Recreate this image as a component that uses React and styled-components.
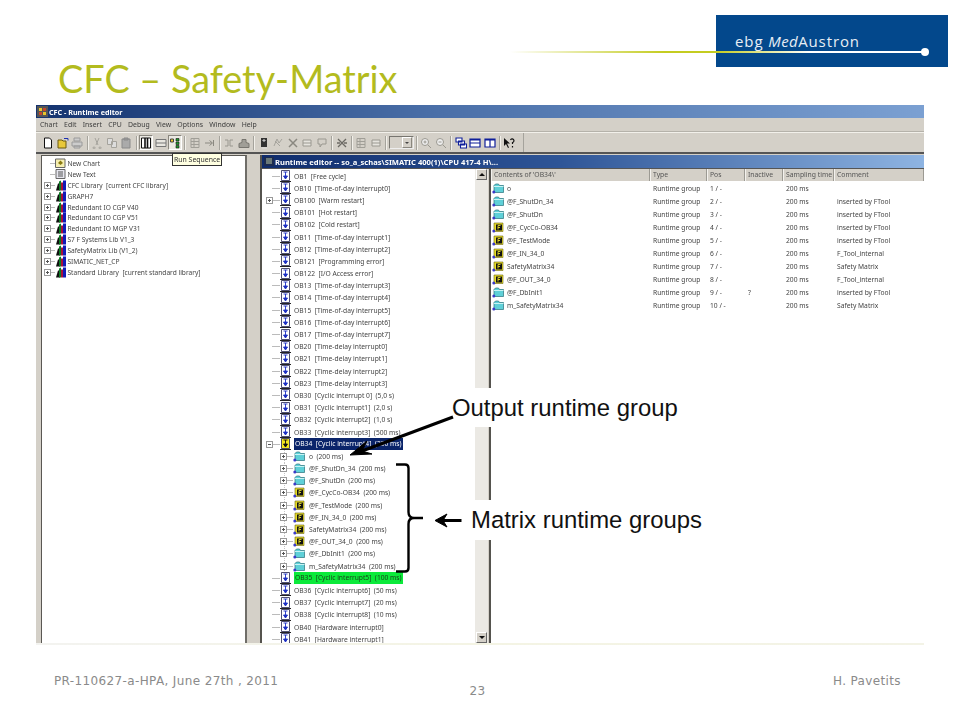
import React from 'react';
import styled, { createGlobalStyle } from 'styled-components';

const GlobalStyle = createGlobalStyle`
  html, body {
    margin: 0;
    padding: 0;
    background: #fff;
  }
`;

const Slide = styled.div`
  position: relative;
  width: 960px;
  height: 720px;
  overflow: hidden;
  background: #fff;
  display: flex;
  flex-direction: column;
`;

const Header = styled.header`
  height: 105px;
  display: flex;
  align-items: flex-start;
  padding-left: 58px;
  padding-right: 12px;
  box-sizing: border-box;
`;

const Title = styled.h1`
  margin: 58px 0 0;
  font: 400 37.8px/42px Lato, "Open Sans", sans-serif;
  color: #b3bb1e;
  white-space: nowrap;
`;

const Brand = styled.div`
  margin: 15px 0 0 auto;
  display: flex;
  align-items: flex-start;
`;

const FadeLine = styled.div`
  width: 206px;
  height: 2px;
  margin-top: 36px;
  background: linear-gradient(90deg, rgba(196, 204, 32, 0), #c4cc20 75%);
`;

const BrandBox = styled.div`
  position: relative;
  width: 232px;
  height: 52px;
  box-sizing: border-box;
  padding: 17px 0 0 19px;
  background: #03488c;
  color: #e8eef5;
  font: 400 15px/18px "Open Sans", sans-serif;
  letter-spacing: 0.9px;

  em {
    font-style: italic;
    letter-spacing: 0.4px;
  }

  &::before {
    content: '';
    position: absolute;
    left: 0;
    top: 36px;
    width: 208px;
    height: 2px;
    background: linear-gradient(90deg, #c4cc20, #fff 45%);
  }

  &::after {
    content: '';
    position: absolute;
    left: 205px;
    top: 33px;
    width: 8px;
    height: 8px;
    border-radius: 50%;
    background: #fff;
  }
`;

const Win = styled.div`
  width: 888px;
  height: 538px;
  margin-left: 36px;
  display: flex;
  flex-direction: column;
  background: #d4d0c8;
  font-family: "Noto Sans", "Open Sans", sans-serif;
  color: #3c3c3c;
  filter: blur(0.4px);
  overflow: hidden;
`;

const TitleBar = styled.div`
  height: 13px;
  flex: none;
  display: flex;
  align-items: center;
  gap: 1px;
  padding-left: 1px;
  background: linear-gradient(90deg, #14336f, #4a6fa8 45%, #7ba0d2);
  color: #fff;
  font-size: 7.2px;
  font-weight: 700;
  white-space: pre;
`;

const MenuBar = styled.div`
  height: 13px;
  flex: none;
  display: flex;
  align-items: center;
  gap: 6.3px;
  padding-left: 4px;
  font-size: 6.9px;
  border-bottom: 1px solid #b5b2aa;
`;

const Toolbar = styled.div`
  height: 20px;
  flex: none;
  display: flex;
  align-items: center;
  padding-left: 5px;
  border-top: 1px solid #f2f0ea;
  box-sizing: border-box;
`;

const ToolStrip = styled.div`
  width: 482px;
  height: 100%;
  display: flex;
  align-items: center;
  border-right: 1px solid #a5a39c;
`;

const ToolButton = styled.div`
  width: 14.5px;
  height: 15px;
  flex: none;
  display: flex;
  align-items: center;
  justify-content: center;
  box-sizing: border-box;
  border: 1px solid ${p => (p.$pressed ? '#8a877f' : 'transparent')};
  border-right-color: ${p => (p.$pressed ? '#fff' : 'transparent')};
  border-bottom-color: ${p => (p.$pressed ? '#fff' : 'transparent')};
  background: ${p => (p.$pressed ? '#ebe9e3' : 'transparent')};
`;

const ToolSep = styled.div`
  width: 1px;
  height: 14px;
  flex: none;
  margin: 0 2.2px;
  background: #a5a39c;
  box-shadow: 1px 0 0 #f2f0ea;
`;

const Combo = styled.div`
  width: 25px;
  height: 13px;
  flex: none;
  box-sizing: border-box;
  display: flex;
  justify-content: flex-end;
  align-items: center;
  border: 1px solid #77756f;
  border-right-color: #eee;
  border-bottom-color: #eee;
  background: #d4d0c8;
  padding-right: 1px;
`;

const SmallArrow = styled.div`
  width: 8px;
  height: 9px;
  display: flex;
  align-items: center;
  justify-content: center;
  border: 1px solid #8a877f;
  border-left-color: #fff;
  border-top-color: #fff;

  &::after {
    content: '';
    border: 2px solid transparent;
    border-top: 2px solid #444;
    border-bottom: 0;
  }
`;

const Tooltip = styled.div`
  position: absolute;
  left: 172px;
  top: 153px;
  height: 11px;
  padding: 0 1px;
  display: flex;
  align-items: center;
  background: #ffffe1;
  border: 1px solid #333;
  font: 400 6.9px "Noto Sans", sans-serif;
  color: #333;
  filter: blur(0.3px);
  white-space: nowrap;
`;

const Workspace = styled.div`
  flex: 1;
  min-height: 0;
  display: flex;
  border-top: 2px solid #555;
  padding: 1px 0 0 5px;
`;

const LibraryPane = styled.div`
  width: 206px;
  flex: none;
  box-sizing: border-box;
  margin-bottom: -4px;
  padding-top: 2px;
  background: #fff;
  border: 1px solid #5a5853;
  border-right: 2px solid #6f6d68;
`;

const LibraryRow = styled.div`
  height: 10.9px;
  display: flex;
  align-items: center;
  font-size: 6.6px;
  white-space: pre;
`;

const Twig = styled.div`
  width: ${p => p.$w}px;
  height: 100%;
  flex: none;
  display: flex;
  align-items: center;
  box-sizing: border-box;
  padding-left: ${p => p.$pad}px;
  background:
    linear-gradient(#bbb, #bbb) no-repeat right center / ${p => p.$line}px 1px,
    ${p => (p.$guide ? 'repeating-linear-gradient(#c4c4c4 0 1px, transparent 1px 2px) no-repeat 21.5px 0 / 1px 100%' : 'none')};
`;

const Expander = styled.div`
  width: 7px;
  height: 7px;
  flex: none;
  box-sizing: border-box;
  border: 1px solid #999;
  background: linear-gradient(#555, #555) center / 3px 1px no-repeat, ${p => (p.$open ? 'none' : 'linear-gradient(#555, #555) center / 1px 3px no-repeat')}, #fff;
`;

const MdiWindow = styled.div`
  flex: 1;
  min-width: 0;
  margin-left: 13px;
  display: flex;
  flex-direction: column;
  border-left: 2px solid #55534e;
`;

const MdiTitle = styled(TitleBar)`
  height: 13px;
  padding-left: 2px;
  font-size: 7.6px;
  background: linear-gradient(90deg, #0f2c6c, #2e5597 45%, #8eb4e2);
`;

const MdiBody = styled.div`
  flex: 1;
  min-height: 0;
  display: flex;
  border-top: 1px solid #555;
`;

const TreePane = styled.div`
  width: 213px;
  flex: none;
  overflow: hidden;
  background: #fff;
  padding-top: 1px;
  margin-bottom: -4px;
`;

const TreeRow = styled.div`
  height: 12.2px;
  display: flex;
  align-items: center;
  font-size: 6.7px;
  white-space: pre;
`;

const RowLabel = styled.span`
  margin-left: ${p => p.$gap}px;
  color: #444;
`;

const HighlightLabel = styled.span`
  width: 109px;
  box-sizing: border-box;
  height: 12px;
  margin-left: 3px;
  padding-left: 1px;
  line-height: 12px;
  background: ${p => (p.$green ? '#0bea3a' : '#0a246a')};
  color: ${p => (p.$green ? '#1b3b1b' : '#fff')};
`;

const ScrollBar = styled.div`
  width: 13px;
  flex: none;
  display: flex;
  flex-direction: column;
  justify-content: space-between;
  background: #ebe9e4;
  padding: 0 1px;
  box-sizing: border-box;
`;

const ScrollButton = styled.div`
  height: 11px;
  display: flex;
  align-items: center;
  justify-content: center;
  background: #d4d0c8;
  border: 1px solid #fff;
  border-right-color: #666;
  border-bottom-color: #666;
  box-sizing: border-box;

  &::after {
    content: '';
    border: 3px solid transparent;
    ${p => (p.$down ? 'border-top: 3px solid #111; border-bottom: 0;' : 'border-bottom: 3px solid #111; border-top: 0;')}
  }
`;

const ListPane = styled.div`
  flex: 1;
  min-width: 0;
  margin-left: 1px;
  background: #fff;
  border-left: 2px solid #55534e;
`;

const columns = '159px 57px 38px 38px 51px 1fr';

const ListHeader = styled.div`
  height: 12px;
  display: grid;
  grid-template-columns: ${columns};
  background: #d4d0c8;
  font-size: 6.8px;
  color: #555;
`;

const HeaderCell = styled.div`
  padding-left: 3px;
  line-height: 12px;
  white-space: nowrap;
  overflow: hidden;
  border-right: 1px solid #9c9a93;
  box-shadow: inset 1px 0 0 #f4f2ee;
`;

const ListBody = styled.div`
  padding-top: 1px;
`;

const ListRow = styled.div`
  height: 13px;
  display: grid;
  grid-template-columns: ${columns};
  align-items: center;
  font-size: 6.7px;
  color: #444;
  white-space: nowrap;
`;

const NameCell = styled.div`
  display: flex;
  align-items: center;
  gap: 3px;
  padding-left: 1px;
`;

const Cell = styled.div`
  padding-left: 3px;
`;

const Callout = styled.div`
  position: absolute;
  left: ${p => p.$x}px;
  top: ${p => p.$y}px;
  width: ${p => p.$w}px;
  height: ${p => p.$h}px;
  padding-left: ${p => p.$pad}px;
  display: flex;
  align-items: center;
  box-sizing: border-box;
  background: #fff;
  color: #111;
  font: 400 23.9px "Liberation Sans", Arial, sans-serif;
  white-space: nowrap;
`;

const Overlay = styled.svg`
  position: absolute;
  left: 0;
  top: 0;
  pointer-events: none;
`;

const BottomRule = styled.div`
  height: 2px;
  margin: 0 36px;
  background: linear-gradient(90deg, #f3f3f0, #f4f4e4 50%, #f3f3e6);
`;

const Footer = styled.footer`
  display: flex;
  flex-direction: column;
  padding: 30px 59px 0 54px;
  color: #8a8a8a;
  font: 400 12px/12px "DejaVu Sans", Verdana, sans-serif;
  letter-spacing: 0.37px;
`;

const FooterRow = styled.div`
  display: flex;
  justify-content: space-between;
`;

const PageNumber = styled.div`
  text-align: center;
  margin-top: -2px;
`;

const ObIcon = ({ active }) => (
  <svg width="11" height="12" viewBox="0 0 11 12">
    <path d="M1.500 .5h8v10h-8z" fill={active ? '#f4e81e' : '#fff'} stroke="#23234f" strokeWidth=".8" />
    <path d="M3.500 2h4M5.500 2v6M3.500 6l2 3 2-3z" stroke={active ? '#111' : '#1c2fc4'} fill={active ? '#111' : '#1c2fc4'} strokeWidth=".9" />
    <path d="M0 11.500h11" stroke="#222" strokeWidth="1" />
  </svg>
);

const FolderIcon = () => (
  <svg width="12" height="11" viewBox="0 0 12 11">
    <path d="M2 2.500l1.500-1.500h3l1 1.500h4v7h-9.500z" fill="#5fd0d8" stroke="#26707a" strokeWidth=".7" />
    <path d="M2 3.500h9.500" stroke="#c8f4f4" strokeWidth="1" />
    <circle cx="1.800" cy="9" r="1.500" fill="#3a3ac8" />
  </svg>
);

const SafetyIcon = () => (
  <svg width="12" height="11" viewBox="0 0 12 11">
    <path d="M2 1h9v8.500h-9z" fill="#e6dc2a" stroke="#6b6410" strokeWidth=".6" />
    <path d="M4 2.500h6v6h-6z" fill="#111" />
    <path d="M6 3.500h2.500M6 3.500v4M6 5.500h2" stroke="#e6dc2a" strokeWidth=".9" fill="none" />
    <circle cx="1.800" cy="9" r="1.500" fill="#3a3ac8" />
  </svg>
);

const ChartIcon = () => (
  <svg width="11" height="10" viewBox="0 0 11 10">
    <path d="M.5 1h9.500v8.500h-9.500z" fill="#f6efb0" stroke="#666" />
    <path d="M3 5l2.500-2.500 2.500 2.500-2.500 2z" fill="#8a7a10" />
  </svg>
);

const TextIcon = () => (
  <svg width="11" height="10" viewBox="0 0 11 10">
    <path d="M1 .5h9v9h-9z" fill="#e6e6ee" stroke="#666" />
    <path d="M3 3h5M3 5h5M3 7h5" stroke="#555" />
  </svg>
);

const BooksIcon = () => (
  <svg width="11" height="11" viewBox="0 0 11 11">
    <path d="M1 10.500l2-7h2v7z" fill="#111" />
    <path d="M4 10.500v-9l2-1v10z" fill="#0d7a24" />
    <path d="M6 10.500v-8h2v8z" fill="#a8123a" />
    <path d="M8 10.500v-10h3v10z" fill="#101ab8" />
  </svg>
);

const glyphs = {
  doc: <path d="M2.500 1h5l2 2v8h-7z" fill="#fff" stroke="#111" />,
  open: <><path d="M1 3h4l1 1h3v7h-8z" fill="#e8c83a" stroke="#6a5a10" /><path d="M7 1.500h4v2" stroke="#1a2fb0" fill="none" /></>,
  print: <path d="M3 1h6v3h-6zM1 5h10v4h-10zM3 9h6v2h-6z" fill="#ccc" stroke="#9a9a9a" />,
  cut: <path d="M4 1l3 7M8 1l-3 7M3 10a1 1 0 1 0 .1 0M9 10a1 1 0 1 0 .1 0" stroke="#a5a39c" fill="none" />,
  copy: <path d="M1.500 1.500h5v6h-5zM5.500 4.500h5v6h-5z" fill="#ddd" stroke="#a5a39c" />,
  paste: <path d="M2 2h8v9h-8zM4 1h4v2h-4z" fill="#aaa" stroke="#8a8a8a" />,
  split: <><path d="M1.500 1h9v10h-9z" fill="#fff" stroke="#111" /><path d="M5 1v10M7.500 1v10" stroke="#111" strokeWidth="1.600" /></>,
  panes: <path d="M1 2.500h10v7h-10zM1 6h10" fill="#e8e6e0" stroke="#777" />,
  seq: <><path d="M1.500 2h3v3h-3z" fill="#e8c62a" stroke="#444" /><path d="M7 1.500h3v2.500h-3zM7 5h3v2.500h-3zM7 8.500h3v2.500h-3z" fill="#1c9a2c" stroke="#111" strokeWidth=".6" /></>,
  sheet: <path d="M2 1.500h8v9h-8zM2 4.500h8M2 7.500h8M5 1.500v9" fill="none" stroke="#a09e97" />,
  arrow: <path d="M2 6h7M6.500 3.500l3 2.500-3 2.500M10.500 3v6" fill="none" stroke="#8a8880" />,
  link: <path d="M2 3h3v6h-3M10 3h-3v6h3" fill="none" stroke="#9a9890" />,
  house: <path d="M1 10.500v-4l3-1v-3h4v3l3 1v4z" fill="#a09e97" stroke="#77756f" />,
  tag: <><path d="M3 1h6v9h-6z" fill="#333" /><path d="M5 3h2v1h-2zM4 11h5" stroke="#ddd" /></>,
  bolt: <path d="M2 9l3-7 2 4 3-4M3 4l5 5" fill="none" stroke="#a5a39c" />,
  cross: <path d="M2 2l8 8M10 2l-8 8" stroke="#8a8880" strokeWidth="1.500" />,
  lines: <path d="M2 3h8v6h-8zM2 6h8" fill="#e6e4de" stroke="#9a9890" />,
  mark: <path d="M2 2h8v5h-4l-2 3v-3h-2z" fill="none" stroke="#9a9890" />,
  crossDark: <path d="M2 2l8 8M10 2l-8 8M1 6h3M8 6h3" stroke="#6c6a64" strokeWidth="1.300" />,
  zoomIn: <><circle cx="5" cy="5" r="3.500" fill="#eee" stroke="#9a9890" /><path d="M8 8l3 3M3.500 5h3M5 3.500v3" stroke="#9a9890" /></>,
  zoomOut: <><circle cx="5" cy="5" r="3.500" fill="#eee" stroke="#9a9890" /><path d="M8 8l3 3M3.500 5h3" stroke="#9a9890" /></>,
  cascade: <path d="M1 1h6v4h-6zM3.500 4h6v4h-6zM5.500 7h6v4h-6z" fill="#fff" stroke="#0f1f9a" strokeWidth="1.100" />,
  rows: <path d="M1 2h10v8h-10zM1 6h10M1 3h10" fill="#fff" stroke="#0f1f9a" strokeWidth="1.200" />,
  cols: <path d="M1 2h10v8h-10zM6 2v8M1 3h10" fill="#fff" stroke="#0f1f9a" strokeWidth="1.200" />,
  help: <><path d="M1 1v8l2-2 2 4 1-.5-2-4h3z" fill="#111" /><path d="M7.500 3a1.800 1.800 0 1 1 2 2.500v1.500M9.500 9v1.500" fill="none" stroke="#111" strokeWidth="1.200" /></>,
};

const Tool = ({ g, pressed }) => (
  <ToolButton $pressed={pressed}>
    <svg width="12" height="12" viewBox="0 0 12 12">{glyphs[g]}</svg>
  </ToolButton>
);

const toolGroups = [
  ['doc', 'open', 'print'],
  ['cut', 'copy', 'paste'],
  ['split', 'panes', 'seq'],
  ['sheet', 'arrow'],
  ['link', 'house'],
  ['tag', 'bolt', 'cross', 'lines', 'mark'],
  ['crossDark'],
  ['sheet', 'lines'],
  'combo',
  ['zoomIn', 'zoomOut'],
  ['cascade', 'rows', 'cols'],
  ['help'],
];

const menus = ['Chart', 'Edit', 'Insert', 'CPU', 'Debug', 'View', 'Options', 'Window', 'Help'];

const libraries = [
  'CFC Library  [current CFC library]',
  'GRAPH7',
  'Redundant IO CGP V40',
  'Redundant IO CGP V51',
  'Redundant IO MGP V31',
  'S7 F Systems Lib V1_3',
  'SafetyMatrix Lib (V1_2)',
  'SIMATIC_NET_CP',
  'Standard Library  [current standard library]',
];

const obsBefore = [
  'OB1  [Free cycle]',
  'OB10  [Time-of-day interrupt0]',
  'OB100  [Warm restart]',
  'OB101  [Hot restart]',
  'OB102  [Cold restart]',
  'OB11  [Time-of-day interrupt1]',
  'OB12  [Time-of-day interrupt2]',
  'OB121  [Programming error]',
  'OB122  [I/O Access error]',
  'OB13  [Time-of-day interrupt3]',
  'OB14  [Time-of-day interrupt4]',
  'OB15  [Time-of-day interrupt5]',
  'OB16  [Time-of-day interrupt6]',
  'OB17  [Time-of-day interrupt7]',
  'OB20  [Time-delay interrupt0]',
  'OB21  [Time-delay interrupt1]',
  'OB22  [Time-delay interrupt2]',
  'OB23  [Time-delay interrupt3]',
  'OB30  [Cyclic interrupt 0]  (5,0 s)',
  'OB31  [Cyclic interrupt1]  (2,0 s)',
  'OB32  [Cyclic interrupt2]  (1,0 s)',
  'OB33  [Cyclic interrupt3]  (500 ms)',
];

const obsAfter = [
  'OB36  [Cyclic interrupt6]  (50 ms)',
  'OB37  [Cyclic interrupt7]  (20 ms)',
  'OB38  [Cyclic interrupt8]  (10 ms)',
  'OB40  [Hardware interrupt0]',
  'OB41  [Hardware interrupt1]',
];

const groups = [
  { name: 'o', safe: false, pos: '1 / -', comment: '' },
  { name: '@F_ShutDn_34', safe: false, pos: '2 / -', comment: 'inserted by FTool' },
  { name: '@F_ShutDn', safe: false, pos: '3 / -', comment: 'inserted by FTool' },
  { name: '@F_CycCo-OB34', safe: true, pos: '4 / -', comment: 'inserted by FTool' },
  { name: '@F_TestMode', safe: true, pos: '5 / -', comment: 'inserted by FTool' },
  { name: '@F_IN_34_0', safe: true, pos: '6 / -', comment: 'F_Tool_internal' },
  { name: 'SafetyMatrix34', safe: true, pos: '7 / -', comment: 'Safety Matrix' },
  { name: '@F_OUT_34_0', safe: true, pos: '8 / -', comment: 'F_Tool_internal' },
  { name: '@F_DbInit1', safe: false, pos: '9 / -', comment: 'inserted by FTool', inactive: '?' },
  { name: 'm_SafetyMatrix34', safe: false, pos: '10 / -', comment: 'Safety Matrix' },
];

const ObRow = ({ label, expandable }) => (
  <TreeRow>
    <Twig $w={18} $pad={4} $line={expandable ? 7 : 8}>
      {expandable && <Expander />}
    </Twig>
    <ObIcon />
    <RowLabel $gap={3}>{label}</RowLabel>
  </TreeRow>
);

export default function App() {
  return (
    <Slide>
      <GlobalStyle />
      <Header>
        <Title>CFC – Safety-Matrix</Title>
        <Brand>
          <FadeLine />
          <BrandBox>ebg <em>Med</em>Austron</BrandBox>
        </Brand>
      </Header>

      <Win>
        <TitleBar>
          <svg width="11" height="11" viewBox="0 0 11 11">
            <path d="M0 0h11v11h-11z" fill="#555" />
            <path d="M2 2h3v3h-3zM6 6h3v3h-3z" fill="#e8c62a" />
            <path d="M6 2h3v3h-3zM2 6h3v3h-3z" fill="#c8452a" />
          </svg>
          {'CFC - Runtime editor'}
        </TitleBar>
        <MenuBar>
          {menus.map(m => <span key={m}>{m}</span>)}
        </MenuBar>
        <Toolbar>
          <ToolStrip>
            {toolGroups.map((group, i) => (
              <React.Fragment key={i}>
                {group === 'combo'
                  ? <Combo><SmallArrow /></Combo>
                  : group.map((g, j) => <Tool key={j} g={g} pressed={g === 'split' || g === 'seq'} />)}
                {i < toolGroups.length - 1 && <ToolSep />}
              </React.Fragment>
            ))}
          </ToolStrip>
        </Toolbar>
        <Workspace>
          <LibraryPane>
            <LibraryRow>
              <Twig $w={13} $pad={0} $line={5} />
              <ChartIcon />
              <RowLabel $gap={1.5}>New Chart</RowLabel>
            </LibraryRow>
            <LibraryRow>
              <Twig $w={13} $pad={0} $line={5} />
              <TextIcon />
              <RowLabel $gap={1.5}>New Text</RowLabel>
            </LibraryRow>
            {libraries.map(name => (
              <LibraryRow key={name}>
                <Twig $w={13} $pad={2} $line={4}><Expander /></Twig>
                <BooksIcon />
                <RowLabel $gap={1.5}>{name}</RowLabel>
              </LibraryRow>
            ))}
          </LibraryPane>

          <MdiWindow>
            <MdiTitle>
              <svg width="10" height="11" viewBox="0 0 10 11">
                <path d="M0 1h10v9h-10z" fill="#1c2b50" />
                <path d="M2 3h6M2 5h6M2 7h6" stroke="#b8c8a0" />
              </svg>
              {'Runtime editor -- so_a_schas\\SIMATIC 400(1)\\CPU 417-4 H\\...'}
            </MdiTitle>
            <MdiBody>
              <TreePane>
                {obsBefore.map(label => (
                  <ObRow key={label} label={label} expandable={label.startsWith('OB100')} />
                ))}
                <TreeRow>
                  <Twig $w={18} $pad={4} $line={7}><Expander $open /></Twig>
                  <ObIcon active />
                  <HighlightLabel>OB34  [Cyclic interrupt4]  (200 ms)</HighlightLabel>
                </TreeRow>
                {groups.map(g => (
                  <TreeRow key={g.name}>
                    <Twig $w={31} $pad={18} $line={7} $guide><Expander /></Twig>
                    {g.safe ? <SafetyIcon /> : <FolderIcon />}
                    <RowLabel $gap={4}>{`${g.name}  (200 ms)`}</RowLabel>
                  </TreeRow>
                ))}
                <TreeRow>
                  <Twig $w={18} $pad={4} $line={8} />
                  <ObIcon />
                  <HighlightLabel $green>OB35  [Cyclic interrupt5]  (100 ms)</HighlightLabel>
                </TreeRow>
                {obsAfter.map(label => <ObRow key={label} label={label} />)}
              </TreePane>
              <ScrollBar>
                <ScrollButton />
                <ScrollButton $down />
              </ScrollBar>
              <ListPane>
                <ListHeader>
                  <HeaderCell>Contents of 'OB34\'</HeaderCell>
                  <HeaderCell>Type</HeaderCell>
                  <HeaderCell>Pos</HeaderCell>
                  <HeaderCell>Inactive</HeaderCell>
                  <HeaderCell>Sampling time</HeaderCell>
                  <HeaderCell>Comment</HeaderCell>
                </ListHeader>
                <ListBody>
                  {groups.map(g => (
                    <ListRow key={g.name}>
                      <NameCell>
                        {g.safe ? <SafetyIcon /> : <FolderIcon />}
                        <span>{g.name}</span>
                      </NameCell>
                      <Cell>Runtime group</Cell>
                      <Cell>{g.pos}</Cell>
                      <Cell>{g.inactive}</Cell>
                      <Cell>200 ms</Cell>
                      <Cell>{g.comment}</Cell>
                    </ListRow>
                  ))}
                </ListBody>
              </ListPane>
            </MdiBody>
          </MdiWindow>
        </Workspace>
      </Win>
      <BottomRule />

      <Footer>
        <FooterRow>
          <span>PR-110627-a-HPA, June 27th , 2011</span>
          <span>H. Pavetits</span>
        </FooterRow>
        <PageNumber>23</PageNumber>
      </Footer>

      <Tooltip>Run Sequence</Tooltip>
      <Callout $x={448} $y={388} $w={240} $h={39} $pad={4}>Output runtime group</Callout>
      <Callout $x={462} $y={500} $w={250} $h={40} $pad={9}>Matrix runtime groups</Callout>
      <Overlay width="960" height="720" viewBox="0 0 960 720">
        <path d="M453 417L362 451" stroke="#000" strokeWidth="3" fill="none" />
        <path d="M350 455L367 441L362 451L372 454Z" fill="#000" stroke="#000" strokeWidth="1" />
        <path d="M396 464.500H405Q408.500 464.500 408.500 468V512Q408.500 518 414 518H423M414 518Q408.500 518 408.500 524V568Q408.500 571.500 405 571.500H396" stroke="#000" strokeWidth="2.400" fill="none" />
        <path d="M461.500 520.500H442" stroke="#000" strokeWidth="3" fill="none" />
        <path d="M435 520.500L447 514L443 520.500L447 527Z" fill="#000" stroke="#000" strokeWidth="1" />
      </Overlay>
    </Slide>
  );
}
